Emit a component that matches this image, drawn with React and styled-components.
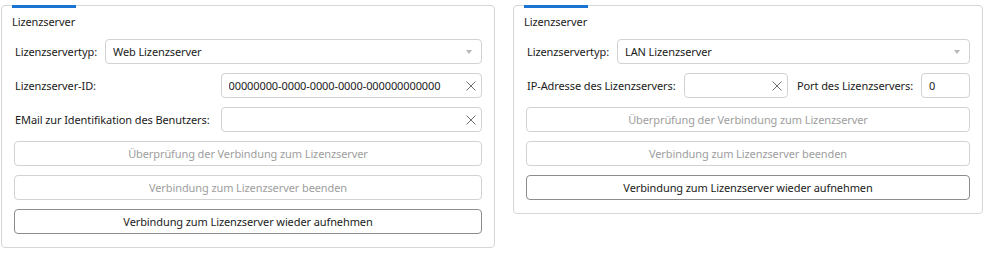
import styled, { createGlobalStyle } from 'styled-components';

const GlobalStyle = createGlobalStyle`
    body {
        margin: 0;
        background: #ffffff;
        font-family: "Noto Sans", "Segoe UI", sans-serif;
        font-size: 11px;
        letter-spacing: -0.1px;
        color: #1b1b1b;
    }
`

const Page = styled.div`
    display: flex;
    align-items: flex-start;
    gap: 18px;
    padding: 5px 0 0 1px;
`

const Panel = styled.section`
    width: ${props => props.width}px;
    box-sizing: border-box;
    border: 1px solid #d6d6d6;
    border-radius: 4px;
    padding: 0 12px 13px 12px;
`

const Accent = styled.div`
    width: 64px;
    height: 3px;
    margin: -1px 0 0 -2px;
    background: #1a74d4;
`

const Title = styled.div`
    margin: 5px 0 0 -2px;
    height: 17px;
    line-height: 17px;
`

const Stack = styled.div`
    display: flex;
    flex-direction: column;
    gap: 9px;
    margin-top: 9px;
`

const Row = styled.div`
    display: flex;
    align-items: center;
    gap: 8px;
`

const FieldGrid = styled.div`
    display: grid;
    grid-template-columns: auto 1fr;
    align-items: center;
    column-gap: 11px;
    row-gap: 9px;
`

const Label = styled.span`
    white-space: nowrap;
    padding-left: 1px;
`

const Box = styled.div`
    flex: ${props => props.fixed ? '0 0 auto' : '1 1 0'};
    width: ${props => props.fixed ? `${props.fixed}px` : 'auto'};
    min-width: 0;
    height: 25px;
    box-sizing: border-box;
    border: 1px solid #d2d2d2;
    border-radius: 4px;
    display: flex;
    align-items: center;
    padding: 0 4px 0 7px;
    background: #ffffff;
`

const Value = styled.span`
    flex: 1;
    white-space: nowrap;
    overflow: hidden;
`

const Arrow = styled.span`
    width: 0;
    height: 0;
    margin-right: 5px;
    border-left: 3.5px solid transparent;
    border-right: 3.5px solid transparent;
    border-top: 4px solid #b8b8b8;
`

const Clear = styled.svg`
    flex: 0 0 auto;
`

const Button = styled.button`
    height: 25px;
    box-sizing: border-box;
    border: 1px solid ${props => props.disabled ? '#d2d2d2' : '#8c8c8c'};
    border-radius: 4px;
    background: #ffffff;
    font-family: inherit;
    font-size: 11px;
    letter-spacing: -0.1px;
    color: ${props => props.disabled ? '#9e9e9e' : '#1b1b1b'};
    padding: 0;
`

const ClearIcon = () => (
    <Clear width="12" height="12" viewBox="0 0 12 12">
        <path d="M1.5 1.5 L10.5 10.5 M10.5 1.5 L1.5 10.5" stroke="#707070" strokeWidth="1" fill="none" />
    </Clear>
)

const Combo = ({ value }) => (
    <Box>
        <Value>{value}</Value>
        <Arrow />
    </Box>
)

const TextBox = ({ value, fixed, clear = true }) => (
    <Box fixed={fixed}>
        <Value>{value}</Value>
        {clear && <ClearIcon />}
    </Box>
)

const ServerButtons = () => (
    <>
        <Button disabled>Überprüfung der Verbindung zum Lizenzserver</Button>
        <Button disabled>Verbindung zum Lizenzserver beenden</Button>
        <Button>Verbindung zum Lizenzserver wieder aufnehmen</Button>
    </>
)

const App = () => {
    return (
        <Page>
            <GlobalStyle />
            <Panel width={494}>
                <Accent />
                <Title>Lizenzserver</Title>
                <Stack>
                    <Row>
                        <Label>Lizenzservertyp:</Label>
                        <Combo value="Web Lizenzserver" />
                    </Row>
                    <FieldGrid>
                        <Label>Lizenzserver-ID:</Label>
                        <TextBox value="00000000-0000-0000-0000-000000000000" />
                        <Label>EMail zur Identifikation des Benutzers:</Label>
                        <TextBox value="" />
                    </FieldGrid>
                    <ServerButtons />
                </Stack>
            </Panel>
            <Panel width={470}>
                <Accent />
                <Title>Lizenzserver</Title>
                <Stack>
                    <Row>
                        <Label>Lizenzservertyp:</Label>
                        <Combo value="LAN Lizenzserver" />
                    </Row>
                    <Row>
                        <Label>IP-Adresse des Lizenzservers:</Label>
                        <TextBox value="" />
                        <Label>Port des Lizenzservers:</Label>
                        <TextBox value="0" fixed={49} clear={false} />
                    </Row>
                    <ServerButtons />
                </Stack>
            </Panel>
        </Page>
    )
}

export default App;
